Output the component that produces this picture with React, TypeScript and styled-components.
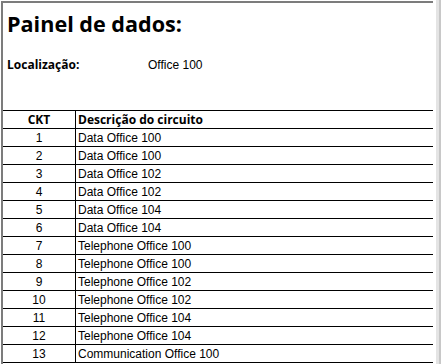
import { createGlobalStyle, styled } from "styled-components";

const GlobalStyle = createGlobalStyle`
  html, body {
    margin: 0;
    padding: 0;
    background: #ffffff;
  }
  body {
    width: 441px;
    height: 364px;
    overflow: hidden;
  }
`;

const Frame = styled.div`
  display: flex;
  width: 441px;
  height: 364px;
`;

const Panel = styled.div`
  width: 430px;
  margin: 1px 0 0 1px;
  border-top: 2px solid #7c7c7c;
  border-left: 2px solid #7c7c7c;
  display: flex;
  flex-direction: column;
`;

const Edge = styled.div`
  width: 2px;
  margin-left: 3px;
  border-left: 3px solid #e4e4e4;
  border-right: 2px solid #c8c8c8;
  background: #2b2b2b;
`;

const Title = styled.h1`
  margin: 8px 0 0 4px;
  font-family: "Open Sans", "Noto Sans", sans-serif;
  font-weight: 700;
  font-size: 21.6px;
  line-height: 26px;
  color: #000;
`;

const InfoRow = styled.div`
  display: flex;
  align-items: baseline;
  margin: 19px 0 0 4px;
  height: 18px;
`;

const Label = styled.span`
  width: 141px;
  font-family: "Open Sans", "Noto Sans", sans-serif;
  font-weight: 700;
  font-size: 12px;
  color: #000;
`;

const Value = styled.span`
  font-family: "Liberation Sans", Arial, sans-serif;
  font-size: 12px;
  color: #000;
`;

const Table = styled.table`
  margin-top: 36px;
  width: 430px;
  border-collapse: collapse;
  border-top: 1px solid #000;
`;

const Row = styled.tr`
  height: 18px;
  border-bottom: 1px solid #000;
`;

const Cell = styled.td<{ $num?: boolean; $head?: boolean }>`
  padding: 0 0 0 ${(p) => (p.$num ? "0" : "2px")};
  width: ${(p) => (p.$num ? "72px" : "auto")};
  text-align: ${(p) => (p.$num ? "center" : "left")};
  border-right: ${(p) => (p.$num ? "1px solid #000" : "none")};
  font-family: ${(p) =>
    p.$head ? `"Open Sans", "Noto Sans", sans-serif` : `"Liberation Sans", Arial, sans-serif`};
  font-weight: ${(p) => (p.$head ? 700 : 400)};
  font-size: 12px;
  line-height: 16px;
  color: #000;
  white-space: nowrap;
`;

const circuits = [
  "Data Office 100",
  "Data Office 100",
  "Data Office 102",
  "Data Office 102",
  "Data Office 104",
  "Data Office 104",
  "Telephone Office 100",
  "Telephone Office 100",
  "Telephone Office 102",
  "Telephone Office 102",
  "Telephone Office 104",
  "Telephone Office 104",
  "Communication Office 100",
];

function App() {
  return (
    <>
      <GlobalStyle />
      <Frame>
        <Panel>
          <Title>Painel de dados:</Title>
          <InfoRow>
            <Label>Localização:</Label>
            <Value>Office 100</Value>
          </InfoRow>
          <Table>
            <tbody>
              <Row>
                <Cell $num $head>CKT</Cell>
                <Cell $head>Descrição do circuito</Cell>
              </Row>
              {circuits.map((c, i) => (
                <Row key={i}>
                  <Cell $num>{i + 1}</Cell>
                  <Cell>{c}</Cell>
                </Row>
              ))}
            </tbody>
          </Table>
        </Panel>
        <Edge />
      </Frame>
    </>
  );
}

export default App;
